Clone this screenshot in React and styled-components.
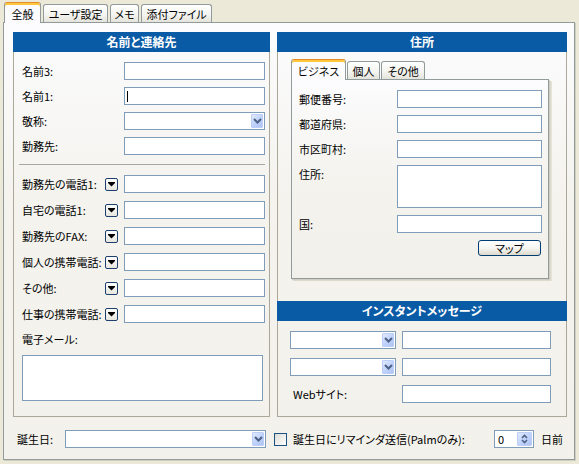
import React from 'react';
import styled, { createGlobalStyle } from 'styled-components';

const Global = createGlobalStyle`
  html, body { margin: 0; padding: 0; background: #ECE9D8; }
  body {
    font-family: "Noto Sans CJK JP", "Noto Sans", sans-serif;
    font-size: 11px;
    color: #000;
    font-feature-settings: "palt";
  }
  * { box-sizing: border-box; }
`;

const Window = styled.div`
  width: 579px;
  height: 464px;
  padding: 2px 0 0 3px;
  display: flex;
  flex-direction: column;
`;

const TabStrip = styled.div`
  display: flex;
  align-items: flex-end;
  gap: ${p => p.$gap ?? 2}px;
  height: 20px;
  padding-left: ${p => p.$pl ?? 0}px;
  position: relative;
  z-index: 1;
  flex: none;
`;

const Tab = styled.div`
  width: ${p => p.$w}px;
  height: ${p => (p.$active ? 21 : 18)}px;
  margin-bottom: ${p => (p.$active ? -1 : 0)}px;
  border: 1px solid #919B9C;
  border-bottom: none;
  border-top-color: ${p => (p.$active ? '#E68B2C' : '#919B9C')};
  border-radius: 3px 3px 0 0;
  background: ${p => (p.$active ? '#FCFCFE' : 'linear-gradient(#FFFFFF, #F3F3EF 60%, #E4E3DB)')};
  box-shadow: ${p => (p.$active ? 'inset 0 2px 0 #FFC83C' : 'none')};
  display: flex;
  align-items: center;
  justify-content: center;
  padding-top: ${p => (p.$active ? 1 : 0)}px;
  white-space: nowrap;
  line-height: 14px;
`;

const Panel = styled.div`
  width: 572px;
  height: 438px;
  border: 1px solid #919B9C;
  background: linear-gradient(#FCFCFE, #F4F3EE 40%, #F2F1EB);
  box-shadow: 1px 1px 0 #D0CEBF;
  padding: 9px 7px 0 9px;
  display: flex;
  flex-direction: column;
`;

const Main = styled.div`
  display: grid;
  grid-template-columns: 257px 290px;
  column-gap: 7px;
  height: 385px;
`;

const Column = styled.div`
  display: flex;
  flex-direction: column;
  min-height: 0;
`;

const GroupHeader = styled.div`
  height: 20px;
  flex: none;
  background: #0A5BA6;
  color: #fff;
  font-weight: bold;
  font-size: 12px;
  display: flex;
  align-items: center;
  justify-content: center;
  line-height: 14px;
`;

const GroupBody = styled.div`
  border: 1px solid #ACA899;
  border-top: none;
  border-bottom: ${p => (p.$open ? 'none' : '1px solid #ACA899')};
  flex: ${p => (p.$h ? 'none' : '1')};
  height: ${p => (p.$h ? `${p.$h}px` : 'auto')};
  padding: ${p => p.$pad};
  display: flex;
  flex-direction: column;
  align-items: flex-start;
`;

const FormGrid = styled.div`
  display: grid;
  width: 100%;
  grid-template-columns: ${p => p.$cols};
  column-gap: ${p => p.$cg ?? 0}px;
  row-gap: ${p => p.$rg}px;
  align-items: center;
`;

const Label = styled.span`
  line-height: 18px;
  white-space: nowrap;
  align-self: ${p => (p.$top ? 'start' : 'center')};
  padding-left: ${p => p.$indent ?? 0}px;
  min-width: 0;
`;

const Caption = styled.span`
  line-height: 18px;
  white-space: nowrap;
  margin-top: 7px;
`;

const TextBox = styled.div`
  height: ${p => p.$h ?? 18}px;
  width: ${p => (p.$w ? `${p.$w}px` : '100%')};
  margin-top: ${p => p.$mt ?? 0}px;
  border: 1px solid #7F9DB9;
  background: #fff;
  display: flex;
  align-items: center;
  flex: none;
`;

const Caret = styled.span`
  width: 1px;
  height: 11px;
  margin-left: 2px;
  background: #000;
`;

const Combo = styled.div`
  height: 18px;
  width: ${p => (p.$w ? `${p.$w}px` : '100%')};
  border: 1px solid #7F9DB9;
  background: #fff;
  padding: 1px;
  display: flex;
  justify-content: flex-end;
  flex: none;
`;

const ComboButton = styled.span`
  width: 12px;
  height: 14px;
  border-radius: 1px;
  background: linear-gradient(135deg, #E3EBFD, #C1D3FB 50%, #AFC4F3);
  border: 1px solid #BCCEF7;
  display: flex;
  align-items: center;
  justify-content: center;
`;

const Chevron = () => (
  <svg width="9" height="6" viewBox="0 0 9 6">
    <polyline points="1,1 4.5,4.5 8,1" fill="none" stroke="#4D6185" strokeWidth="2" />
  </svg>
);

const DropMini = styled.span`
  width: 13px;
  height: 13px;
  border: 1px solid #1C3F6E;
  border-radius: 2px;
  background: linear-gradient(#FFFFFF, #E6E5DE);
  display: flex;
  align-items: center;
  justify-content: center;
`;

const MiniArrow = () => (
  <svg width="7" height="5" viewBox="0 0 7 5">
    <rect x="0" y="0" width="7" height="1" fill="#000" />
    <polygon points="0,1 7,1 3.5,4.5" fill="#000" />
  </svg>
);

const Separator = styled.div`
  height: 1px;
  width: calc(100% + 3px);
  background: #A7A6A0;
  margin: 9px 0 10px -3px;
  flex: none;
`;

const InnerArea = styled.div`
  display: flex;
  flex-direction: column;
`;

const InnerPanel = styled.div`
  width: 258px;
  height: 200px;
  border: 1px solid #919B9C;
  background: linear-gradient(#FCFCFE, #F4F3EE 50%, #F1F0EA);
  box-shadow: 1px 1px 0 #D0CEBF, 2px 2px 0 #DCDACC, 3px 2px 0 #E6E4D8;
  padding: 10px 6px 0 7px;
`;

const PushButton = styled.button`
  grid-column: 2;
  justify-self: end;
  width: 63px;
  height: 16px;
  margin-right: 1px;
  padding: 0;
  border: 1px solid #003C74;
  border-radius: 3px;
  background: linear-gradient(#FFFFFF, #F4F4F0 55%, #DCD8CC);
  font: inherit;
  font-size: 11px;
  line-height: 14px;
  color: #000;
`;

const Footer = styled.div`
  display: flex;
  align-items: center;
  height: 18px;
  margin-top: 13px;
  padding: 0 4px;
`;

const FooterLabel = styled.span`
  white-space: nowrap;
  line-height: 18px;
  width: ${p => (p.$w ? `${p.$w}px` : 'auto')};
  margin-left: ${p => p.$ml ?? 0}px;
  flex: none;
`;

const Checkbox = styled.span`
  width: 13px;
  height: 13px;
  margin-left: 8px;
  border: 1px solid #1C5180;
  background: linear-gradient(135deg, #DCDCD7, #FFFFFF);
  flex: none;
`;

const Spinner = styled.div`
  margin-left: auto;
  width: 40px;
  height: 18px;
  border: 1px solid #7F9DB9;
  background: #fff;
  padding: 1px;
  display: flex;
  align-items: center;
  justify-content: space-between;
`;

const SpinValue = styled.span`
  padding-left: 2px;
  line-height: 14px;
`;

const SpinButtons = styled.span`
  width: 15px;
  height: 14px;
  border-radius: 1px;
  border: 1px solid #BCCEF7;
  background: linear-gradient(135deg, #E3EBFD, #C1D3FB 50%, #AFC4F3);
  display: flex;
  align-items: center;
  justify-content: center;
`;

const SpinIcon = () => (
  <svg width="7" height="10" viewBox="0 0 7 10">
    <polyline points="1,4 3.5,1.5 6,4" fill="none" stroke="#4D6185" strokeWidth="1.6" />
    <polyline points="1,6 3.5,8.5 6,6" fill="none" stroke="#4D6185" strokeWidth="1.6" />
  </svg>
);

const Select = ({ w }) => (
  <Combo $w={w}>
    <ComboButton><Chevron /></ComboButton>
  </Combo>
);

const topRows = ['名前3:', '名前1:', '敬称:', '勤務先:'];
const phoneRows = ['勤務先の電話1:', '自宅の電話1:', '勤務先のFAX:', '個人の携帯電話:', 'その他:', '仕事の携帯電話:'];

export default function App() {
  return (
    <>
      <Global />
      <Window>
        <TabStrip $pl={1} $gap={2}>
          <Tab $w={37} $active>全般</Tab>
          <Tab $w={65}>ユーザ設定</Tab>
          <Tab $w={29}>メモ</Tab>
          <Tab $w={71}>添付ファイル</Tab>
        </TabStrip>
        <Panel>
          <Main>
            <Column>
              <GroupHeader>名前と連絡先</GroupHeader>
              <GroupBody $pad="10px 4px 0 8px">
                <FormGrid $cols="minmax(0, 1fr) 141px" $rg={7}>
                  {topRows.map((t, i) => (
                    <React.Fragment key={t}>
                      <Label>{t}</Label>
                      {i === 2 ? (
                        <Select />
                      ) : (
                        <TextBox>{i === 1 && <Caret />}</TextBox>
                      )}
                    </React.Fragment>
                  ))}
                </FormGrid>
                <Separator />
                <FormGrid $cols="minmax(0, 1fr) 13px 141px" $cg={6} $rg={8}>
                  {phoneRows.map(t => (
                    <React.Fragment key={t}>
                      <Label>{t}</Label>
                      <DropMini><MiniArrow /></DropMini>
                      <TextBox />
                    </React.Fragment>
                  ))}
                </FormGrid>
                <Caption>電子メール:</Caption>
                <TextBox $w={241} $h={46} $mt={7} />
              </GroupBody>
            </Column>
            <Column>
              <GroupHeader>住所</GroupHeader>
              <GroupBody $open $h={249} $pad="7px 0 0 13px">
                <InnerArea>
                  <TabStrip $gap={1}>
                    <Tab $w={55} $active>ビジネス</Tab>
                    <Tab $w={33}>個人</Tab>
                    <Tab $w={44}>その他</Tab>
                  </TabStrip>
                  <InnerPanel>
                    <FormGrid $cols="minmax(0, 1fr) 145px" $rg={7}>
                      <Label>郵便番号:</Label>
                      <TextBox />
                      <Label>都道府県:</Label>
                      <TextBox />
                      <Label>市区町村:</Label>
                      <TextBox />
                      <Label $top>住所:</Label>
                      <TextBox $h={43} />
                      <Label>国:</Label>
                      <TextBox />
                      <PushButton>マップ</PushButton>
                    </FormGrid>
                  </InnerPanel>
                </InnerArea>
              </GroupBody>
              <GroupHeader>インスタントメッセージ</GroupHeader>
              <GroupBody $pad="10px 15px 0 12px">
                <FormGrid $cols="106px 149px" $cg={6} $rg={9}>
                  <Select />
                  <TextBox />
                  <Select />
                  <TextBox />
                  <Label $indent={3}>Webサイト:</Label>
                  <TextBox />
                </FormGrid>
              </GroupBody>
            </Column>
          </Main>
          <Footer>
            <FooterLabel $w={48}>誕生日:</FooterLabel>
            <Select w={201} />
            <Checkbox />
            <FooterLabel $ml={6}>誕生日にリマインダ送信(Palmのみ):</FooterLabel>
            <Spinner>
              <SpinValue>0</SpinValue>
              <SpinButtons><SpinIcon /></SpinButtons>
            </Spinner>
            <FooterLabel $ml={7}>日前</FooterLabel>
          </Footer>
        </Panel>
      </Window>
    </>
  );
}
